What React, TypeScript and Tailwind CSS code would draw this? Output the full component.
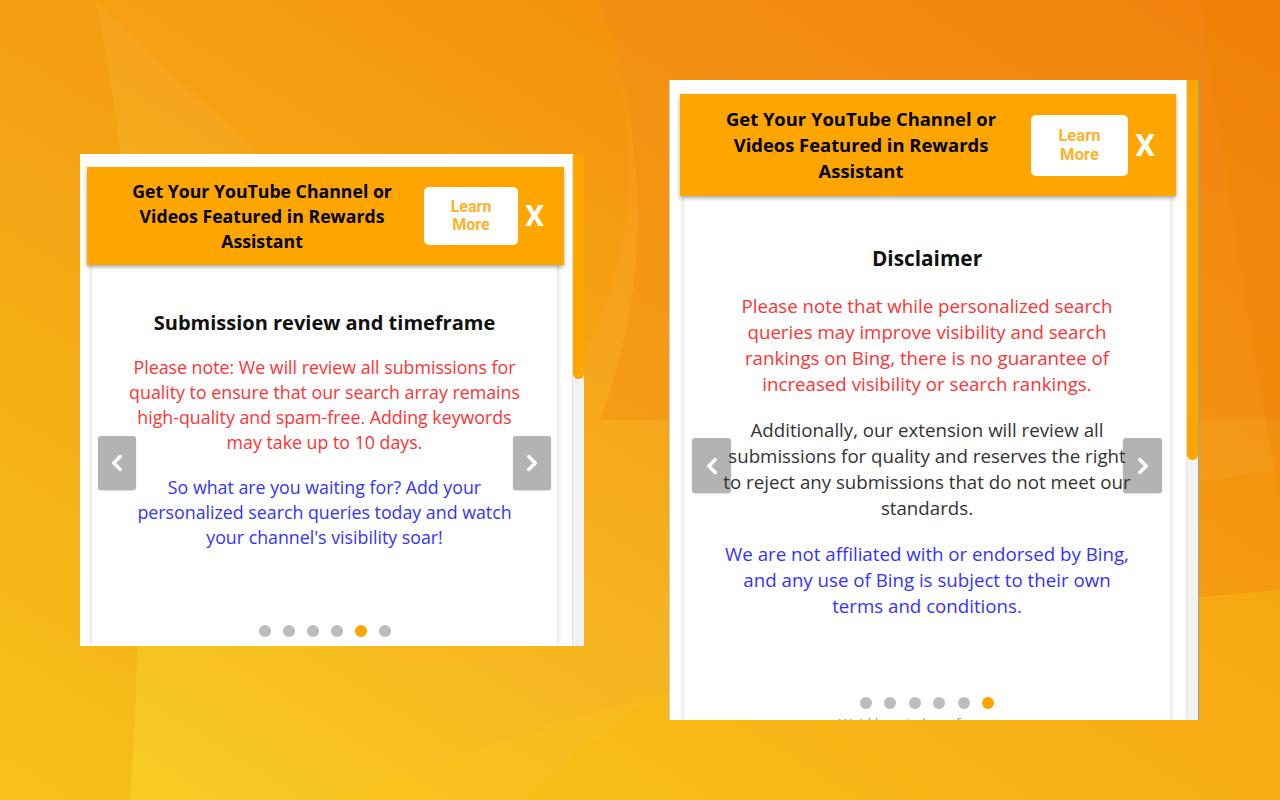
import React from 'react';
import { ChevronLeft, ChevronRight } from 'lucide-react';

const body = { fontFamily: '"Open Sans", "Noto Sans", sans-serif' };
const roboto = { fontFamily: 'Roboto, "Liberation Sans", sans-serif' };

type Dots = { count: number; active: number };

const DotRow: React.FC<Dots & { className: string }> = ({ count, active, className }) => (
  <div className={`flex justify-center ${className}`}>
    {Array.from({ length: count }).map((_, i) => (
      <span
        key={i}
        className={i === active ? 'w-[12px] h-[12px] rounded-full bg-[#ffa500]' : 'w-[12px] h-[12px] rounded-full bg-[#bdbdbd]'}
      />
    ))}
  </div>
);

const Background: React.FC = () => (
  <svg className="absolute inset-0" width="1280" height="800" viewBox="0 0 1280 800">
    <defs>
      <linearGradient id="bg" x1="1" y1="0" x2="0" y2="1">
        <stop offset="0" stopColor="#f27f08" />
        <stop offset="0.5" stopColor="#f6a313" />
        <stop offset="1" stopColor="#f8cf1e" />
      </linearGradient>
    </defs>
    <rect width="1280" height="800" fill="url(#bg)" />
    <path d="M95 0 C 140 200, 150 500, 130 800 L 520 800 C 700 650, 900 520, 1280 470 L 1280 0 L 600 0 C 640 120, 650 250, 560 400 C 420 300, 250 150, 95 0 Z" fill="#ffffff" opacity="0.04" />
    <path d="M0 0 L 95 0 C 140 200, 150 500, 130 800 L 0 800 Z" fill="#f08a10" opacity="0.18" />
    <path d="M600 0 C 640 120, 660 260, 600 420 L 1280 420 L 1280 0 Z" fill="#ee7a05" opacity="0.25" />
    <path d="M330 800 C 600 700, 900 620, 1280 590 L 1280 800 Z" fill="#f9c41a" opacity="0.35" />
    <path d="M1200 0 C 1230 200, 1260 400, 1280 500 L 1280 0 Z" fill="#f08000" opacity="0.3" />
  </svg>
);

const Arrow: React.FC<{ side: 'left' | 'right'; className: string }> = ({ side, className }) => (
  <div className={`absolute flex items-center justify-center bg-[#b3b3b3] rounded-[3px] shadow-[0_1px_2px_rgba(0,0,0,0.15)] ${className}`}>
    {side === 'left' ? (
      <ChevronLeft size={26} strokeWidth={3.2} color="#ffffff" />
    ) : (
      <ChevronRight size={26} strokeWidth={3.2} color="#ffffff" />
    )}
  </div>
);

const PanelLeft: React.FC = () => (
  <div className="absolute left-[80px] top-[154px] w-[504px] h-[492px] bg-white flex overflow-hidden">
    <div className="flex-1 flex flex-col pl-[7px] pr-[8px] pt-[13px]">
      <div className="relative z-10 h-[98px] shrink-0 bg-[#ffa500] flex items-center shadow-[0_2px_4px_rgba(0,0,0,0.35)]">
        <div className="flex-1 pl-[13px] text-center text-black font-bold text-[17.7px] leading-[25px] whitespace-nowrap" style={body}>
          Get Your YouTube Channel or<br />Videos Featured in Rewards<br />Assistant
        </div>
        <div
          className="w-[94px] h-[58px] bg-white rounded-[5px] flex flex-col items-center justify-center text-[#ffb22c] font-bold text-[16px] leading-[18px]"
          style={roboto}
        >
          <span>Learn</span>
          <span>More</span>
        </div>
        <div className="w-[46px] pr-[20px] text-right text-white font-bold text-[30px] leading-none" style={roboto}>
          X
        </div>
      </div>
      <div className="relative flex-1 ml-[5px] mr-[7px] bg-white shadow-[0_0_6px_rgba(0,0,0,0.2)] flex flex-col items-center pt-[44px] whitespace-nowrap" style={body}>
        <Arrow side="left" className="left-[6px] top-[171px] w-[38px] h-[54px]" />
        <Arrow side="right" className="right-[6px] top-[171px] w-[38px] h-[54px]" />
        <h2 className="relative text-[20px] leading-[27px] font-bold text-[#111]">Submission review and timeframe</h2>
        <p className="relative mt-[19px] text-center text-[17.8px] leading-[25px] text-[#ff3333]">
          Please note: We will review all submissions for<br />quality to ensure that our search array remains<br />high-quality and spam-free. Adding keywords<br />may take up to 10 days.
        </p>
        <p className="relative mt-[20px] text-center text-[17.8px] leading-[25px] text-[#3333ff]">
          So what are you waiting for? Add your<br />personalized search queries today and watch<br />your channel's visibility soar!
        </p>
        <DotRow count={6} active={4} className="mt-[75px] gap-[12px]" />
      </div>
    </div>
    <div className="w-[12px] flex flex-col bg-[#f3f3f3] border-l border-[#e2e2e2]">
      <div className="h-[225px] bg-[#ffa500] rounded-b-[6px]" />
    </div>
  </div>
);

const PanelRight: React.FC = () => (
  <div className="absolute left-[669px] top-[80px] w-[530px] h-[640px] bg-white flex overflow-hidden border-l border-[#d0d0d0]">
    <div className="flex-1 flex flex-col pl-[10px] pr-[10px] pt-[14px]">
      <div className="relative z-10 h-[102px] shrink-0 bg-[#ffa500] flex items-center shadow-[0_2px_4px_rgba(0,0,0,0.35)]">
        <div className="flex-1 pl-[11px] text-center text-black font-bold text-[18.4px] leading-[26px] whitespace-nowrap" style={body}>
          Get Your YouTube Channel or<br />Videos Featured in Rewards<br />Assistant
        </div>
        <div
          className="w-[97px] h-[61px] bg-white rounded-[5px] flex flex-col items-center justify-center text-[#ffb22c] font-bold text-[16.6px] leading-[19px]"
          style={roboto}
        >
          <span>Learn</span>
          <span>More</span>
        </div>
        <div className="w-[48px] pr-[21px] text-right text-white font-bold text-[31px] leading-none" style={roboto}>
          X
        </div>
      </div>
      <div className="relative flex-1 ml-[4px] mr-[6px] bg-white shadow-[0_0_6px_rgba(0,0,0,0.2)] flex flex-col items-center pt-[48px] whitespace-nowrap" style={body}>
        <Arrow side="left" className="left-[8px] top-[242px] w-[39px] h-[55px]" />
        <Arrow side="right" className="right-[8px] top-[242px] w-[39px] h-[55px]" />
        <h2 className="relative text-[20.8px] leading-[28px] font-bold text-[#111]">Disclaimer</h2>
        <p className="relative mt-[21px] text-center text-[18.7px] leading-[26px] text-[#ff3333]">
          Please note that while personalized search<br />queries may improve visibility and search<br />rankings on Bing, there is no guarantee of<br />increased visibility or search rankings.
        </p>
        <p className="relative mt-[20px] text-center text-[18.7px] leading-[26px] text-[#333333]">
          Additionally, our extension will review all<br />submissions for quality and reserves the right<br />to reject any submissions that do not meet our<br />standards.
        </p>
        <p className="relative mt-[20px] text-center text-[18.7px] leading-[26px] text-[#3333ff]">
          We are not affiliated with or endorsed by Bing,<br />and any use of Bing is subject to their own<br />terms and conditions.
        </p>
        <DotRow count={6} active={5} className="mt-[78px] gap-[12.5px]" />
        <p className="mt-[6px] text-[14px] leading-[18px] text-[#999]">We'd love to hear from you</p>
      </div>
    </div>
    <div className="w-[12px] flex flex-col bg-[#f3f3f3] border-l border-[#e2e2e2]">
      <div className="h-[380px] bg-[#ffa500] rounded-b-[6px]" />
    </div>
    <div className="w-[1px] bg-[#8fa3b3]" />
  </div>
);

export default function App() {
  return (
    <div className="relative w-[1280px] h-[800px] overflow-hidden">
      <Background />
      <PanelLeft />
      <PanelRight />
    </div>
  );
}
